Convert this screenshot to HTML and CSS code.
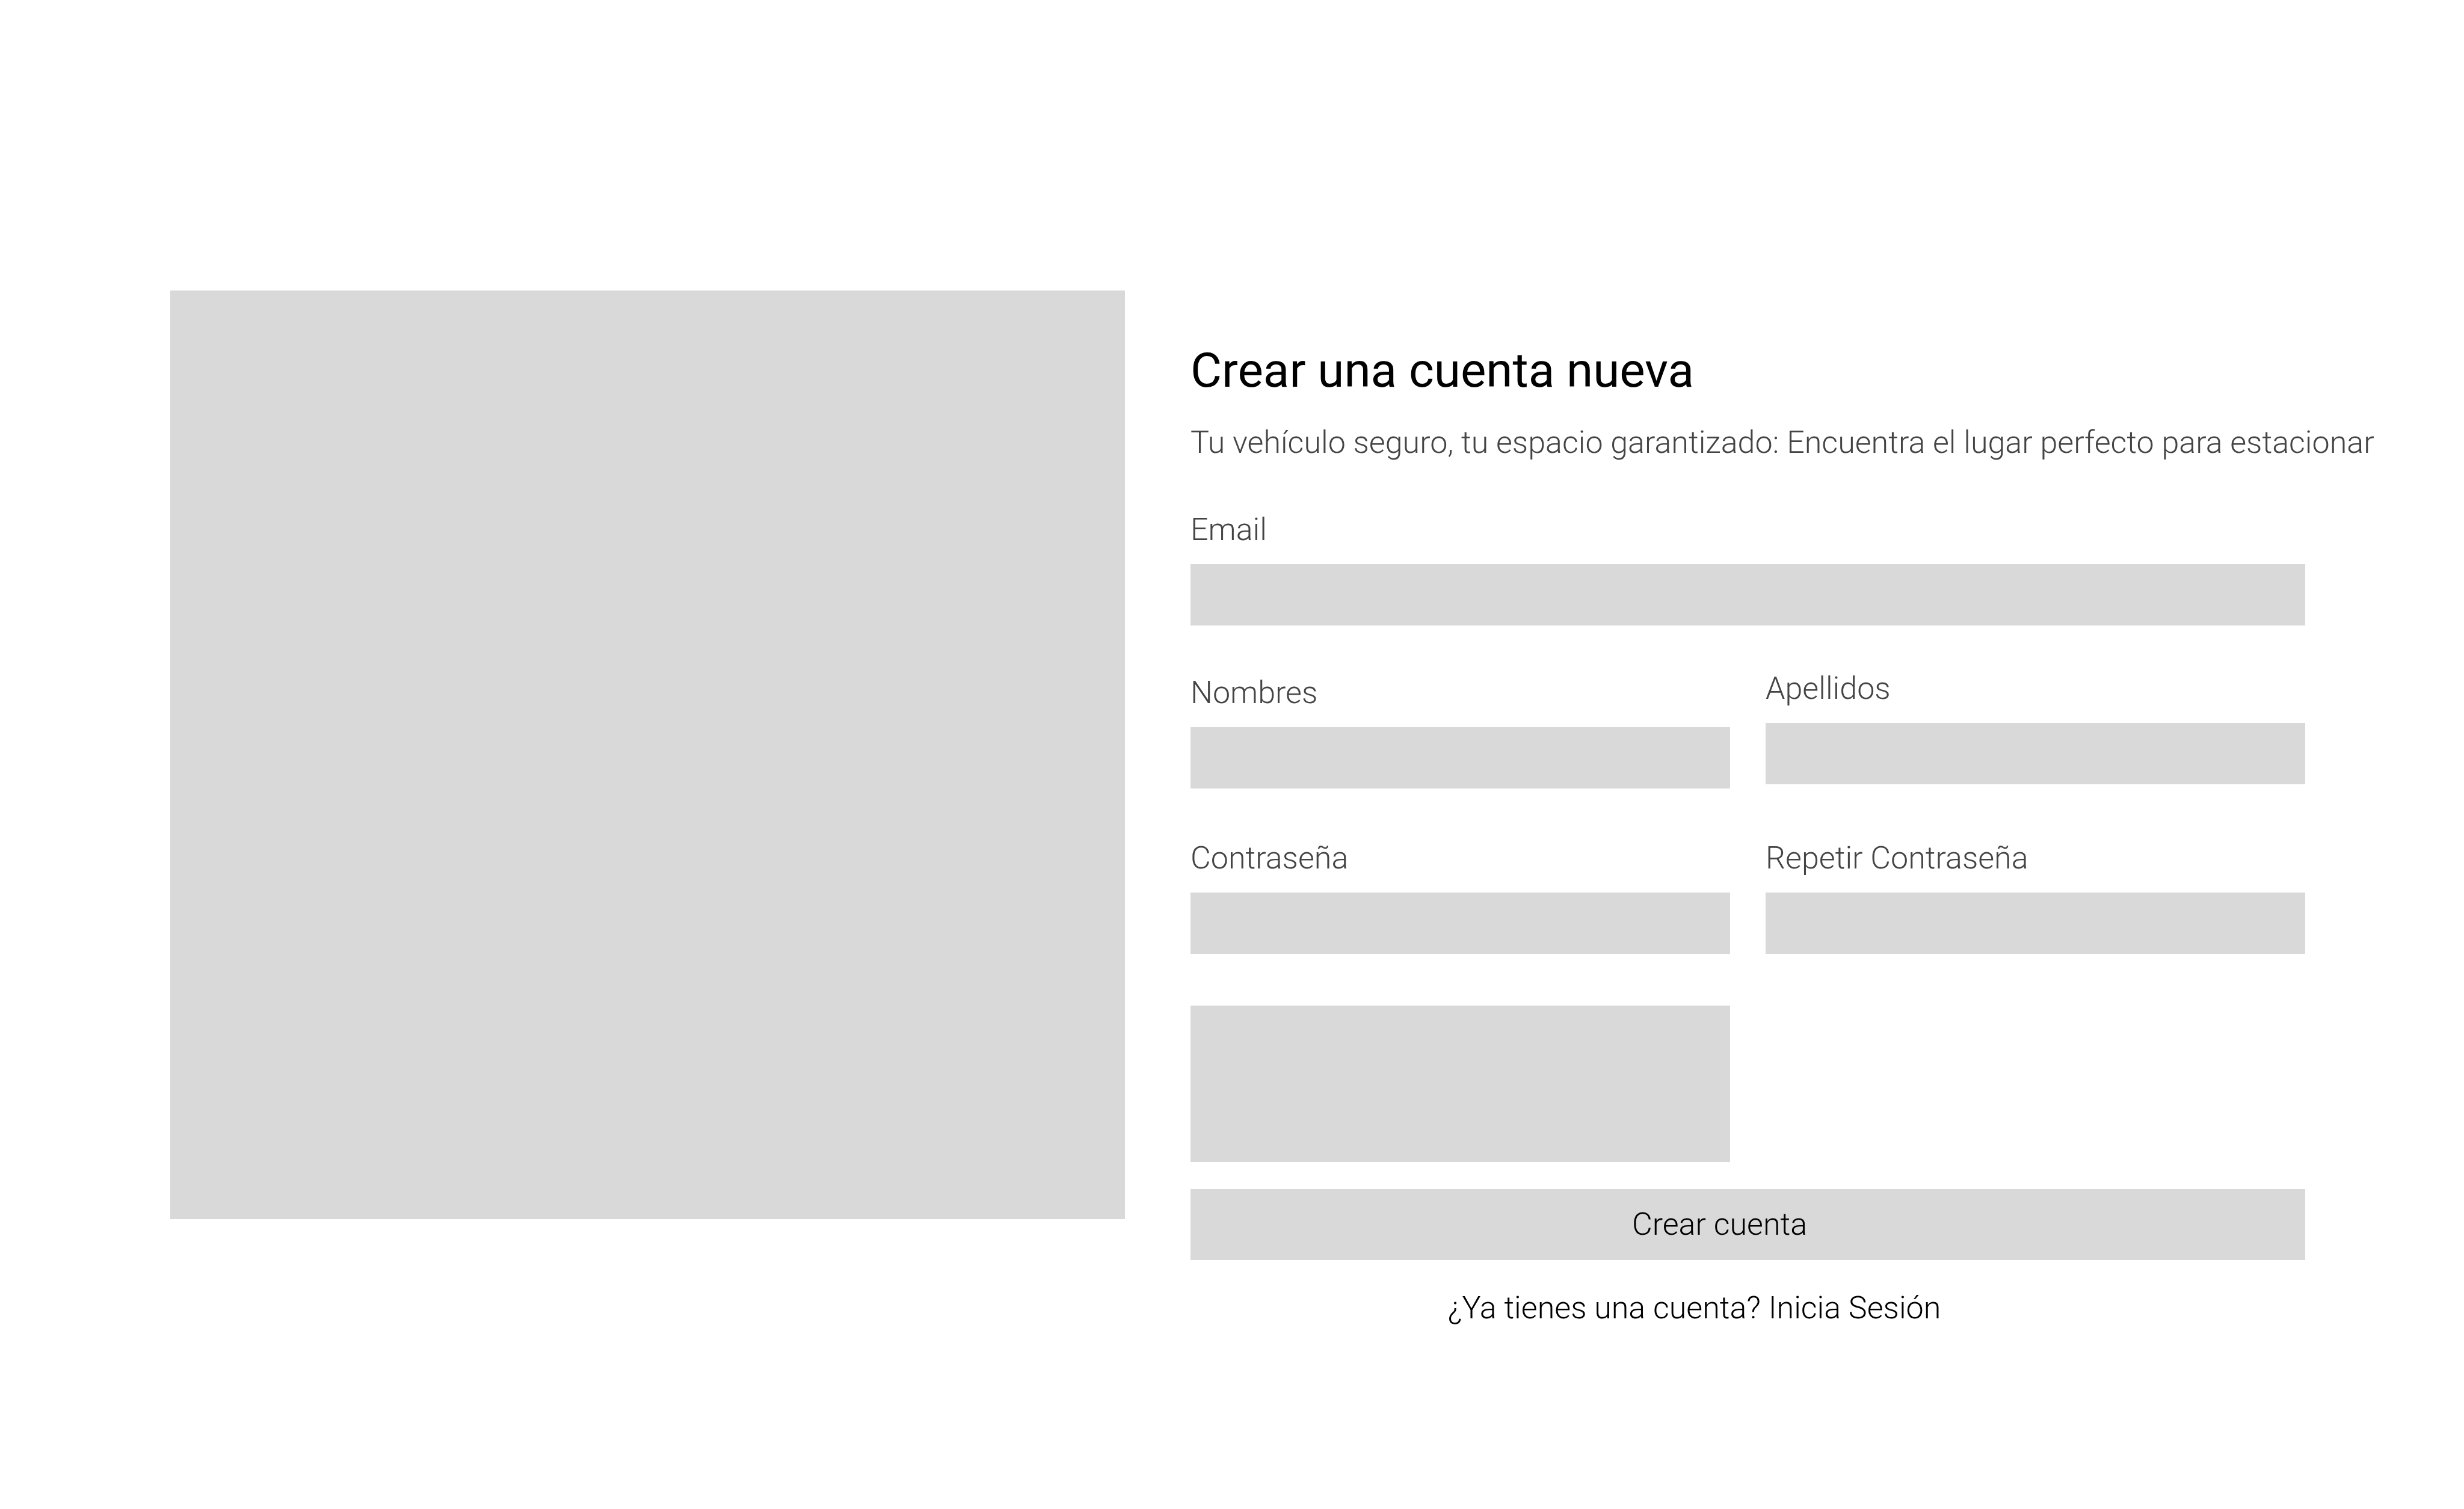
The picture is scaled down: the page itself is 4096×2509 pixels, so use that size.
FILE: index.html
```html
<!DOCTYPE html>
<html lang="es">
<head>
  <meta charset="utf-8">
  <meta name="viewport" content="width=device-width, initial-scale=1">
  <title>Crear una cuenta nueva</title>
  <link rel="stylesheet" href="styles.css">
</head>
<body>
  <main class="signup">
    <div class="signup-picture"></div>

    <section class="signup-content">
      <h1 class="title">Crear una cuenta nueva</h1>
      <p class="subtitle">Tu vehículo seguro, tu espacio garantizado: Encuentra el lugar perfecto para estacionar</p>

      <form class="form">
        <div class="field">
          <label for="email">Email</label>
          <input id="email" type="email" autocomplete="email">
        </div>

        <div class="row row-names">
          <div class="field field-first">
            <label for="nombres">Nombres</label>
            <input id="nombres" type="text" autocomplete="given-name">
          </div>
          <div class="field">
            <label for="apellidos">Apellidos</label>
            <input id="apellidos" type="text" autocomplete="family-name">
          </div>
        </div>

        <div class="row row-passwords">
          <div class="field">
            <label for="contrasena">Contraseña</label>
            <input id="contrasena" type="password" autocomplete="new-password">
          </div>
          <div class="field">
            <label for="repetir">Repetir Contraseña</label>
            <input id="repetir" type="password" autocomplete="new-password">
          </div>
        </div>

        <div class="row row-captcha">
          <div class="captcha"></div>
        </div>

        <button class="submit" type="submit">Crear cuenta</button>
      </form>

      <p class="login">¿Ya tienes una cuenta? <a href="#">Inicia Sesión</a></p>
    </section>
  </main>
</body>
</html>
```
FILE: styles.css
```css
* {
  box-sizing: border-box;
}

body {
  margin: 0;
  background: #fff;
  color: #000;
  font-family: Roboto, "Liberation Sans", sans-serif;
  font-size: 52px;
  font-weight: 300;
  line-height: 60px;
}

.signup {
  display: grid;
  grid-template-columns: minmax(0, 1587fr) minmax(0, 1853fr);
  align-items: start;
  column-gap: 109px;
  padding: 483px 264px 100px 283px;
}

.signup-picture {
  aspect-ratio: 1587 / 1544;
  background: #d9d9d9;
}

.signup-content {
  padding-top: 85px;
}

.title {
  margin: 0 0 42px;
  font-size: 80px;
  font-weight: 400;
  line-height: 96px;
}

.subtitle {
  margin: 0 0 85px;
  color: #444;
  white-space: nowrap;
}

.form {
  display: flex;
  flex-direction: column;
}

.row {
  display: grid;
  grid-template-columns: 1fr 1fr;
  align-items: start;
  column-gap: 59px;
  margin-top: 86px;
}

.row-names {
  margin-top: 75px;
}

.field {
  display: flex;
  flex-direction: column;
  gap: 27px;
}

.field-first {
  padding-top: 7px;
}

.field label {
  color: #444;
}

.field input {
  width: 100%;
  height: 102px;
  margin: 0;
  padding: 0 28px;
  border: 0;
  border-radius: 0;
  background: #d9d9d9;
  color: #000;
  font: inherit;
}

.captcha {
  height: 260px;
  background: #d9d9d9;
}

.submit {
  height: 118px;
  margin: 45px 0 0;
  padding: 0 94px 0 0;
  border: 0;
  background: #d9d9d9;
  color: #000;
  font: inherit;
  cursor: pointer;
}

.login {
  margin: 50px 0 0;
  padding-right: 178px;
  text-align: center;
}

.login a {
  color: inherit;
  text-decoration: none;
}
```
